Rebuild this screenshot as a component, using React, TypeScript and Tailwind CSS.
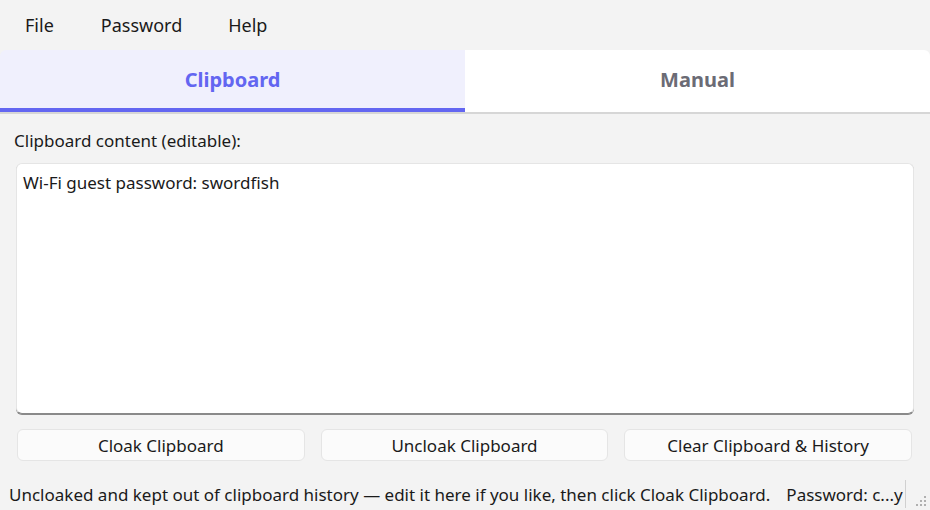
import React from "react";

export default function App() {
  const font = { fontFamily: '"Noto Sans", "Segoe UI", sans-serif' };
  return (
    <div className="w-[930px] h-[510px] bg-[#f3f3f3] flex flex-col overflow-hidden text-[#1a1a1a]" style={font}>
      {/* Menu bar */}
      <div className="h-[50px] flex items-center text-[18px] pt-[1px]">
        <span className="ml-[25px]">File</span>
        <span className="ml-[47px]">Password</span>
        <span className="ml-[46px]">Help</span>
      </div>
      {/* Tabs */}
      <div className="h-[64px] flex border-b-2 border-[#d6d6d6]">
        <div className="w-[465px] bg-[#f0f0fd] border-b-4 border-[#6366f1] rounded-tl-[6px] flex items-center justify-center text-[20px] font-bold text-[#6366f1] pt-[1px]">
          Clipboard
        </div>
        <div className="flex-1 bg-white rounded-tr-[6px] flex items-center justify-center text-[20px] font-bold text-[#6b6b75] pb-[3px]">
          Manual
        </div>
      </div>
      {/* Content */}
      <div className="flex flex-col px-[16px] flex-1">
        <div className="mt-[14px] ml-[-2px] text-[17px] leading-[25px]">Clipboard content (editable):</div>
        <div className="mt-[10px] h-[251px] bg-white rounded-[6px] border border-[#e5e5e5] border-b-[#8a8a8a] shadow-[0_1px_0_#8a8a8a] px-[6px] py-[6px] text-[17px] leading-[25px]">
          Wi-Fi guest password: swordfish
        </div>
        <div className="mt-[15px] grid grid-cols-3 gap-[16px] pr-[2px] pl-[1px]">
          <button className="h-[32px] bg-[#fbfbfb] border border-[#e5e5e5] rounded-[6px] text-[17px] pt-[1px]">Cloak Clipboard</button>
          <button className="h-[32px] bg-[#fbfbfb] border border-[#e5e5e5] rounded-[6px] text-[17px] pt-[1px]">Uncloak Clipboard</button>
          <button className="h-[32px] bg-[#fbfbfb] border border-[#e5e5e5] rounded-[6px] text-[17px] pt-[1px]">Clear Clipboard &amp; History</button>
        </div>
      </div>
      {/* Status bar */}
      <div className="h-[32px] flex items-center text-[17px] relative">
        <span className="ml-[9px] whitespace-nowrap pt-[1px]">Uncloaked and kept out of clipboard history — edit it here if you like, then click Cloak Clipboard.</span>
        <span className="ml-[16px] whitespace-nowrap pt-[1px]">Password: c...y</span>
        <div className="ml-[2px] w-px h-[28px] bg-[#d0d0d0]" />
        <svg className="ml-auto mr-[2px] self-end mb-[2px]" width="14" height="14" viewBox="0 0 14 14">
          <g fill="#b0b0b0">
            <rect x="10" y="2" width="2" height="2" />
            <rect x="6" y="6" width="2" height="2" />
            <rect x="10" y="6" width="2" height="2" />
            <rect x="2" y="10" width="2" height="2" />
            <rect x="6" y="10" width="2" height="2" />
            <rect x="10" y="10" width="2" height="2" />
          </g>
        </svg>
      </div>
    </div>
  );
}
